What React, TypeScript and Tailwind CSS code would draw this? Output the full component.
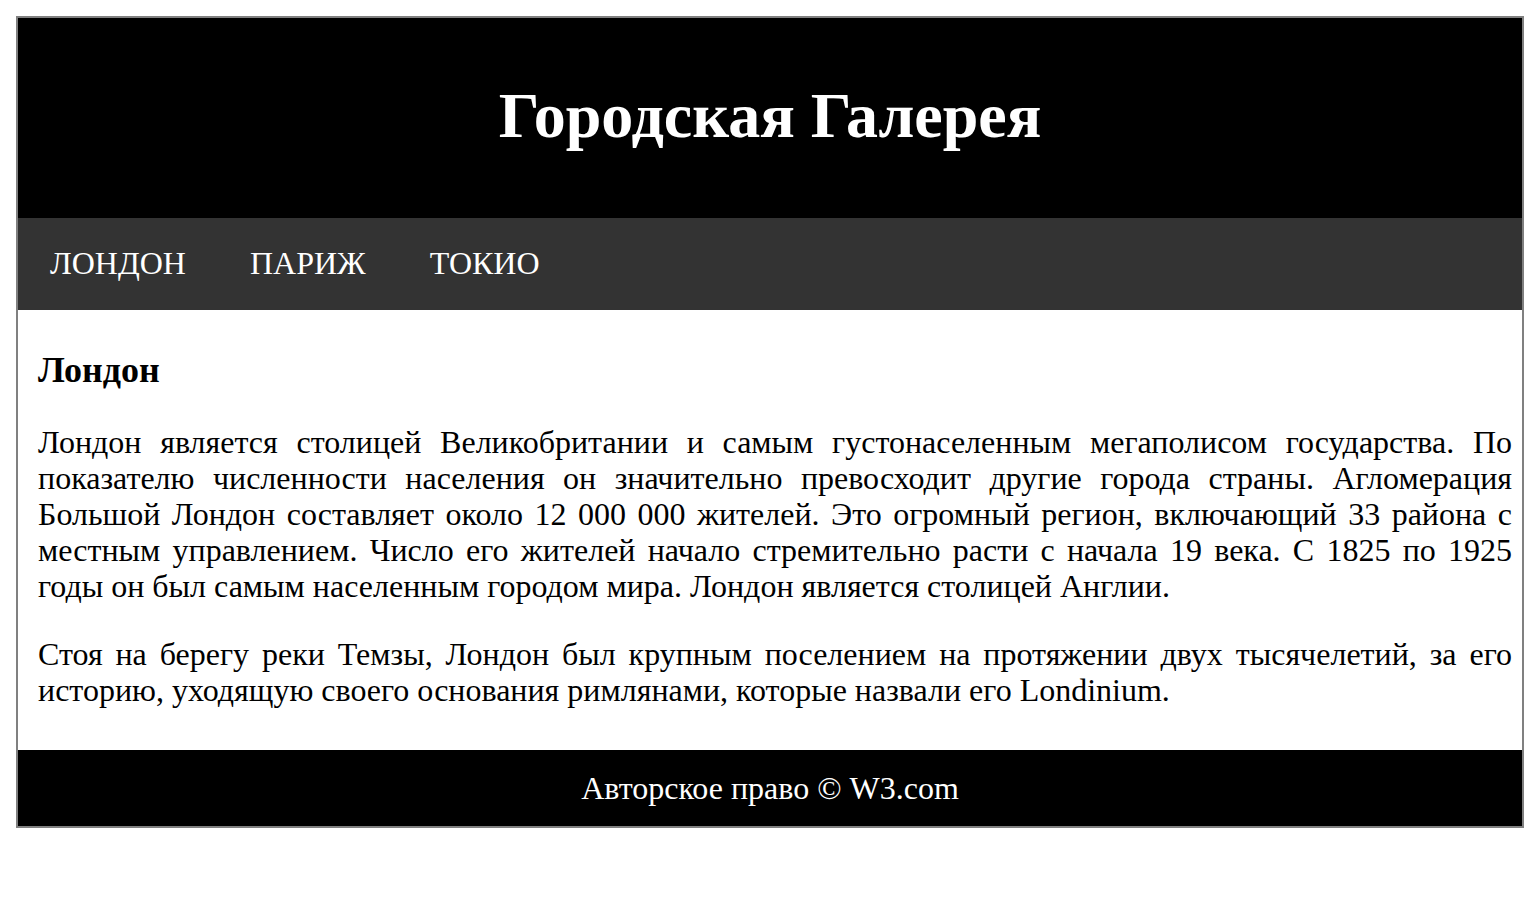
export default function App() {
  return (
    <div className="bg-white min-h-[906px] pt-4 pl-4" style={{ fontFamily: '"Liberation Serif", "Times New Roman", serif' }}>
      <div className="w-[1508px] border-2 border-[#808080]">
        <header className="bg-black h-[200px] pt-[66px] text-center">
          <h1 className="text-white font-bold text-[64px] leading-[64px]">Городская Галерея</h1>
        </header>
        <nav className="bg-[#333333] h-[92px] pt-[27px] flex">
          {['ЛОНДОН', 'ПАРИЖ', 'ТОКИО'].map((c) => (
            <a key={c} className="text-white text-[32px] leading-[36px] px-8">{c}</a>
          ))}
        </nav>
        <main className="pt-[39px] pl-5 pr-[10px] pb-[42px] text-black">
          <h2 className="font-bold text-[36px] leading-[42px] mb-[33px]">Лондон</h2>
          <p className="text-[32px] leading-[36px] text-justify mb-8">
            Лондон является столицей Великобритании и самым густонаселенным мегаполисом государства. По показателю численности населения он значительно превосходит другие города страны. Агломерация Большой Лондон составляет около 12 000 000 жителей. Это огромный регион, включающий 33 района с местным управлением. Число его жителей начало стремительно расти с начала 19 века. С 1825 по 1925 годы он был самым населенным городом мира. Лондон является столицей Англии.
          </p>
          <p className="text-[32px] leading-[36px] text-justify">
            Стоя на берегу реки Темзы, Лондон был крупным поселением на протяжении двух тысячелетий, за его историю, уходящую своего основания римлянами, которые назвали его Londinium.
          </p>
        </main>
        <footer className="bg-black h-[76px] pt-[20px] text-center">
          <p className="text-white text-[32px] leading-[36px]">Авторское право © W3.com</p>
        </footer>
      </div>
    </div>
  );
}
